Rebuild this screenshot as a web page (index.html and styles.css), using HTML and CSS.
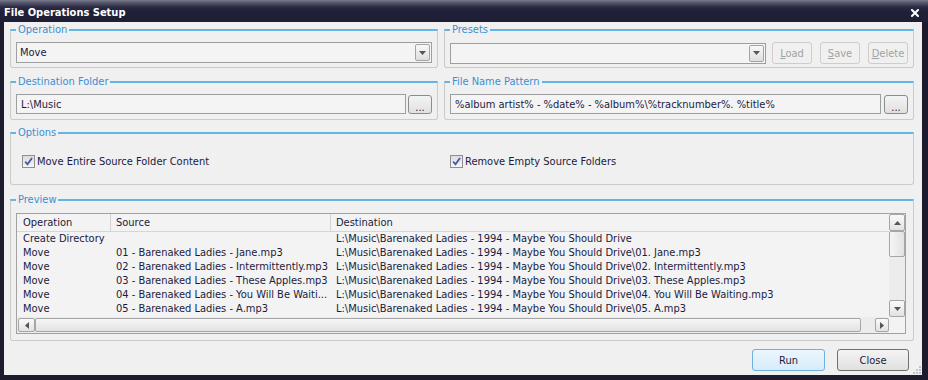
FILE: index.html
```html
<!DOCTYPE html>
<html lang="en">
<head>
    <meta charset="UTF-8">
    <title>File Operations Setup</title>
    <link rel="stylesheet" href="styles.css">
</head>
<body>
    <div class="window">
        <div class="titlebar">
            <span class="title">File Operations Setup</span>
            <svg class="close" width="8" height="8" viewBox="0 0 8 8">
                <path d="M1 1 L7 7 M7 1 L1 7" stroke="#fff" stroke-width="2" stroke-linecap="square"/>
            </svg>
        </div>

        <div class="client">
            <!-- operation / presets -->
            <div class="row split">
                <fieldset class="group g-top">
                    <legend>Operation</legend>
                    <div class="combo">
                        <span class="combo-text">Move</span>
                        <span class="drop"><svg width="7" height="4" viewBox="0 0 7 4"><path d="M0 0 H7 L3.5 4 Z" fill="#555"/></svg></span>
                    </div>
                </fieldset>
                <fieldset class="group g-top">
                    <legend>Presets</legend>
                    <div class="line">
                        <div class="combo grow">
                            <span class="combo-text"></span>
                            <span class="drop"><svg width="7" height="4" viewBox="0 0 7 4"><path d="M0 0 H7 L3.5 4 Z" fill="#555"/></svg></span>
                        </div>
                        <button class="btn small" disabled><u>L</u>oad</button>
                        <button class="btn small" disabled><u>S</u>ave</button>
                        <button class="btn small" disabled><u>D</u>elete</button>
                    </div>
                </fieldset>
            </div>

            <!-- folder / pattern -->
            <div class="row split gap7">
                <fieldset class="group g-top">
                    <legend>Destination Folder</legend>
                    <div class="line">
                        <div class="edit grow">L:\Music</div>
                        <button class="btn dots">...</button>
                    </div>
                </fieldset>
                <fieldset class="group g-top">
                    <legend>File Name Pattern</legend>
                    <div class="line">
                        <div class="edit grow">%album artist% - %date% - %album%\%tracknumber%. %title%</div>
                        <button class="btn dots wide">...</button>
                    </div>
                </fieldset>
            </div>

            <!-- options -->
            <fieldset class="group g-options">
                <legend>Options</legend>
                <div class="checks">
                    <label class="check">
                        <span class="box"><svg width="11" height="11" viewBox="0 0 11 11"><path d="M2.2 5.6 L4.5 8.3 L9 2" fill="none" stroke="#4458b0" stroke-width="1.8"/></svg></span>
                        Move Entire Source Folder Content
                    </label>
                    <label class="check">
                        <span class="box"><svg width="11" height="11" viewBox="0 0 11 11"><path d="M2.2 5.6 L4.5 8.3 L9 2" fill="none" stroke="#4458b0" stroke-width="1.8"/></svg></span>
                        Remove Empty Source Folders
                    </label>
                </div>
            </fieldset>

            <!-- preview -->
            <fieldset class="group g-preview">
                <legend>Preview</legend>
                <div class="list">
                    <div class="table">
                        <div class="tr head">
                            <div class="c1">Operation</div>
                            <div class="c2">Source</div>
                            <div class="c3">Destination</div>
                        </div>
                        <div class="tr">
                            <div class="c1">Create Directory</div>
                            <div class="c2"></div>
                            <div class="c3">L:\Music\Barenaked Ladies - 1994 - Maybe You Should Drive</div>
                        </div>
                        <div class="tr">
                            <div class="c1">Move</div>
                            <div class="c2">01 - Barenaked Ladies - Jane.mp3</div>
                            <div class="c3">L:\Music\Barenaked Ladies - 1994 - Maybe You Should Drive\01. Jane.mp3</div>
                        </div>
                        <div class="tr">
                            <div class="c1">Move</div>
                            <div class="c2">02 - Barenaked Ladies - Intermittently.mp3</div>
                            <div class="c3">L:\Music\Barenaked Ladies - 1994 - Maybe You Should Drive\02. Intermittently.mp3</div>
                        </div>
                        <div class="tr">
                            <div class="c1">Move</div>
                            <div class="c2">03 - Barenaked Ladies - These Apples.mp3</div>
                            <div class="c3">L:\Music\Barenaked Ladies - 1994 - Maybe You Should Drive\03. These Apples.mp3</div>
                        </div>
                        <div class="tr">
                            <div class="c1">Move</div>
                            <div class="c2">04 - Barenaked Ladies - You Will Be Waiti...</div>
                            <div class="c3">L:\Music\Barenaked Ladies - 1994 - Maybe You Should Drive\04. You Will Be Waiting.mp3</div>
                        </div>
                        <div class="tr">
                            <div class="c1">Move</div>
                            <div class="c2">05 - Barenaked Ladies - A.mp3</div>
                            <div class="c3">L:\Music\Barenaked Ladies - 1994 - Maybe You Should Drive\05. A.mp3</div>
                        </div>
                    </div>

                    <div class="vscroll">
                        <span class="sb-btn up"><svg width="7" height="4" viewBox="0 0 7 4"><path d="M0 4 H7 L3.5 0 Z" fill="#555"/></svg></span>
                        <span class="sb-thumb v"></span>
                        <span class="sb-fill"></span>
                        <span class="sb-btn down"><svg width="7" height="4" viewBox="0 0 7 4"><path d="M0 0 H7 L3.5 4 Z" fill="#555"/></svg></span>
                    </div>
                    <div class="hscroll">
                        <span class="sb-btn left"><svg width="4" height="7" viewBox="0 0 4 7"><path d="M4 0 V7 L0 3.5 Z" fill="#555"/></svg></span>
                        <span class="sb-thumb h"></span>
                        <span class="sb-fill"></span>
                        <span class="sb-btn right"><svg width="4" height="7" viewBox="0 0 4 7"><path d="M0 0 V7 L4 3.5 Z" fill="#555"/></svg></span>
                    </div>
                    <div class="corner"></div>
                </div>
            </fieldset>

            <div class="actions">
                <button class="btn action default">Run</button>
                <button class="btn action">Close</button>
            </div>

            <svg class="grip" width="8" height="8" viewBox="0 0 8 8">
                <rect x="6" y="0" width="2" height="2" fill="#c4c4c4"/>
                <rect x="3" y="3" width="2" height="2" fill="#c4c4c4"/>
                <rect x="6" y="3" width="2" height="2" fill="#c4c4c4"/>
                <rect x="0" y="6" width="2" height="2" fill="#c4c4c4"/>
                <rect x="3" y="6" width="2" height="2" fill="#c4c4c4"/>
                <rect x="6" y="6" width="2" height="2" fill="#c4c4c4"/>
            </svg>
        </div>
    </div>
</body>
</html>
```

FILE: styles.css
```css
* {
    box-sizing: border-box;
}
body {
    margin: 0;
    font-family: "DejaVu Sans Condensed", "DejaVu Sans", sans-serif;
    font-size: 11px;
    color: #1b1b40;
    background: #1c1c2c;
}
.window {
    width: 928px;
    height: 380px;
    background: #1c1c2e;
    display: flex;
    flex-direction: column;
}
.titlebar {
    height: 22px;
    flex: none;
    display: flex;
    align-items: center;
    justify-content: space-between;
    padding: 0 9px 0 4px;
    background: linear-gradient(#7a7a8c 0, #53536a 3px, #2a2a44 7px, #1f1f37 12px, #1e1e35 100%);
}
.title {
    color: #fff;
    font-weight: bold;
    font-size: 11px;
    padding-top: 2px;
}
.close {
    margin-top: 3px;
}
.client {
    position: relative;
    flex: 1;
    margin: 0 6px 5px 4px;
    padding: 1px 8px 0 6px;
    background: #f0f0f0;
}

/* group boxes */
.row.split {
    display: grid;
    grid-template-columns: 428px 470px;
    gap: 6px;
}
.gap7 {
    margin-top: 7px;
}
.group {
    margin: 0;
    min-width: 0;
    padding: 6px 5px 4px 5px;
    border: 1px solid #cbcbcb;
    border-top: 2px solid #62b5e5;
    border-radius: 0 0 3px 3px;
}
.group legend {
    padding: 0 2px;
    line-height: 13px;
    color: #3a8fd3;
}
.g-top {
    height: 45px;
}
.g-options {
    height: 59px;
    margin-top: 6px;
}
.g-preview {
    height: 148px;
    margin-top: 8px;
    padding-top: 7px;
    padding-right: 7px;
}
.line {
    display: flex;
    align-items: center;
}
.grow {
    flex: 1;
    min-width: 0;
}

/* edit / combo */
.combo, .edit {
    height: 21px;
    border: 1px solid #9e9e9e;
    background: #f4f4f4;
    display: flex;
    align-items: center;
    padding-left: 3px;
    white-space: nowrap;
}
.combo-text {
    flex: 1;
}
.drop {
    width: 15px;
    height: 17px;
    margin-right: 1px;
    border: 1px solid #a4a4a4;
    border-radius: 2px;
    background: linear-gradient(#f8f8f8, #dedede);
    display: flex;
    align-items: center;
    justify-content: center;
}
.edit {
    height: 20px;
    padding-left: 4px;
}

/* buttons */
.btn {
    font-family: inherit;
    font-size: 11px;
    color: #1b1b40;
    padding: 0;
    border: 1px solid #8c8c8c;
    border-radius: 3px;
    background: linear-gradient(#f4f4f4, #e0e0e0);
}
.btn.small {
    width: 40px;
    height: 22px;
    margin-left: 8px;
    color: #a2a2a2;
    border-color: #cdcdcd;
    background: #f0f0f0;
}
.btn.small:first-of-type {
    margin-left: 6px;
}
.btn.dots {
    width: 24px;
    height: 19px;
    margin-left: 2px;
    line-height: 18px;
    padding-top: 3px;
}
.btn.dots.wide {
    margin-left: 3px;
}

/* checkboxes */
.checks {
    display: grid;
    grid-template-columns: 428px 1fr;
    padding: 10px 0 0 6px;
}
.check {
    display: flex;
    align-items: center;
    gap: 2px;
}
.box {
    width: 13px;
    height: 13px;
    border: 1px solid #8f8f8f;
    background: linear-gradient(#dcdcdc, #f6f6f6);
    display: flex;
    align-items: center;
    justify-content: center;
}

/* preview list */
.list {
    height: 121px;
    border: 1px solid #a2a2a2;
    background: #f3f3f3;
    display: grid;
    grid-template-columns: 1fr 16px;
    grid-template-rows: 1fr 16px;
}
.table {
    overflow: hidden;
}
.tr {
    display: grid;
    grid-template-columns: 94px 220px 1fr;
    height: 14px;
    line-height: 14px;
    white-space: nowrap;
}
.tr > div {
    overflow: hidden;
    padding-left: 5px;
}
.tr > .c1 {
    padding-left: 6px;
}
.tr.head {
    height: 18px;
    line-height: 17px;
    border-bottom: 1px solid #d6d6d6;
}
.tr.head .c1, .tr.head .c2 {
    border-right: 1px solid #d2d2d2;
}
.vscroll, .hscroll {
    display: flex;
    background: #ececec;
}
.vscroll {
    flex-direction: column;
}
.sb-btn {
    border: 1px solid #a6a6a6;
    border-radius: 2px;
    background: linear-gradient(#fafafa, #e2e2e2);
    display: flex;
    align-items: center;
    justify-content: center;
    flex: none;
}
.sb-thumb {
    border: 1px solid #a6a6a6;
    border-radius: 2px;
    background: linear-gradient(90deg, #f6f6f6, #e2e2e2);
    flex: none;
}
.sb-fill {
    flex: 1;
}
.vscroll .sb-btn {
    height: 17px;
}
.sb-thumb.v {
    height: 26px;
}
.hscroll {
    padding: 1px 0 1px 1px;
}
.hscroll .sb-btn {
    width: 17px;
}
.hscroll .sb-btn.right {
    width: 14px;
}
.sb-thumb.h {
    width: 826px;
    background: linear-gradient(#f6f6f6, #e2e2e2);
}

/* bottom buttons */
.actions {
    display: flex;
    justify-content: flex-end;
    gap: 12px;
    margin-top: 8px;
    padding-right: 5px;
}
.btn.action {
    width: 72px;
    height: 22px;
    border-color: #707070;
}
.btn.action.default {
    width: 73px;
    border-color: #6fb0dc;
    background: linear-gradient(#ebf6fd, #d6ecfa);
}
.grip {
    position: absolute;
    right: 1px;
    bottom: 1px;
}
```
